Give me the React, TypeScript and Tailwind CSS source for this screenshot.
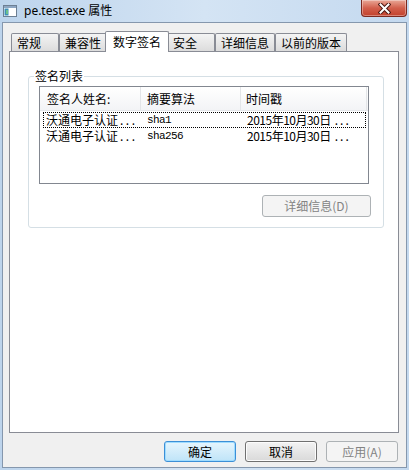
import React from 'react';

type TabDef = { label: string; w: string; active?: boolean };

const tabs: TabDef[] = [
  { label: '常规', w: 'w-[48px]' },
  { label: '兼容性', w: 'w-[48px]' },
  { label: '数字签名', w: 'w-[64px]', active: true },
  { label: '安全', w: 'w-[48px]' },
  { label: '详细信息', w: 'w-[60px]' },
  { label: '以前的版本', w: 'w-[72px]' },
];

const signers = [
  { name: '沃通电子认证', algo: 'sha1', time: '2015年10月30日' },
  { name: '沃通电子认证', algo: 'sha256', time: '2015年10月30日' },
];

// little app-window glyph in the caption
const WinIcon = () => (
  <svg width="14" height="12" viewBox="0 0 14 12" className="shrink-0">
    <rect x="0.5" y="0.5" width="13" height="11" fill="#ffffff" stroke="#6d7f93" />
    <rect x="1" y="1" width="12" height="2" fill="#8ea6c2" />
    <rect x="1.5" y="3.5" width="4" height="7" fill="#3f8fb8" />
    <rect x="3" y="5" width="2" height="4" fill="#6cc08a" />
  </svg>
);

const CloseButton = () => (
  <div className="absolute right-[2px] top-0 flex h-[17px] w-[46px] items-center justify-center rounded-b-[4px] border border-t-0 border-[#7b2a20] bg-gradient-to-b from-[#e8a797] via-[#d25f4c] to-[#c2412c] shadow-[inset_0_0_0_1px_rgba(255,255,255,0.35)]">
    <svg width="13" height="11" viewBox="0 0 13 11">
      <path d="M2.5 1.5 L10.5 9.5 M10.5 1.5 L2.5 9.5" stroke="#4b1711" strokeWidth="4" strokeLinecap="square" />
      <path d="M2.5 1.5 L10.5 9.5 M10.5 1.5 L2.5 9.5" stroke="#ffffff" strokeWidth="2" strokeLinecap="square" />
    </svg>
  </div>
);

const Tab = ({ t }: { t: TabDef }) =>
  t.active ? (
    <div className={`relative -mx-[2px] flex h-[21px] items-center rounded-t-[2px] border border-b-0 border-[#898c95] bg-white pl-[7px] ${t.w}`}>
      {t.label}
    </div>
  ) : (
    <div className={`mb-[1px] flex h-[18px] items-center rounded-t-[2px] border border-b-0 border-[#898c95] bg-gradient-to-b from-[#f4f4f4] to-[#dcdcdc] pl-[5px] ${t.w}`}>
      {t.label}
    </div>
  );

export default function App() {
  return (
    <div className="relative flex h-[470px] w-[409px] flex-col overflow-hidden bg-gradient-to-r from-[#bdd4ec] via-[#d4e4f4] to-[#c4d9ef] px-[2px] pb-[2px] font-['Noto_Sans_CJK_SC',sans-serif] text-[12px] leading-none text-black">
      {/* caption */}
      <div className="flex h-[22px] items-center pl-[1px]">
        <WinIcon />
        <span className="ml-[7px] font-['Noto_Sans','Noto_Sans_CJK_SC',sans-serif] text-[12px]">pe.test.exe 属性</span>
      </div>
      <CloseButton />

      {/* client area */}
      <div className="flex flex-1 flex-col border border-[#8597ad] bg-[#f0f0f0] pl-[6px] pt-[8px]">
        <div className="relative z-10 -mb-[1px] flex h-[21px] items-end pl-[2px]">
          {tabs.map((t) => (
            <Tab key={t.label} t={t} />
          ))}
        </div>

        <div className="h-[382px] w-[390px] border border-[#898c95] bg-white pl-[18px] pt-[24px]">
          {/* group box */}
          <div className="relative h-[152px] w-[356px] rounded-[3px] border border-[#d5dfe5] pl-[10px] pt-[9px]">
            <span className="absolute left-[5px] top-[-8px] bg-white px-[1px] leading-[14px]">签名列表</span>

            <div className="h-[98px] w-[330px] border border-[#828790] bg-white">
              <div className="flex h-[24px] border-b border-[#e5e7ea] bg-gradient-to-b from-white to-[#f3f4f6]">
                <div className="flex w-[101px] items-center border-r border-[#e3e5e8] pl-[7px]">签名人姓名:</div>
                <div className="flex w-[100px] items-center border-r border-[#e3e5e8] pl-[6px]">摘要算法</div>
                <div className="flex w-[126px] items-center border-r border-[#e3e5e8] pl-[5px]">时间戳</div>
              </div>
              <div className="ml-[3px] mt-[1px]">
                {signers.map((s, i) => (
                  <div
                    key={i}
                    className={`flex h-[16px] w-[323px] items-center border border-dotted ${i === 0 ? 'border-black' : 'border-transparent'}`}
                  >
                    <div className="w-[97px] whitespace-nowrap pl-[2px]">
                      {s.name}
                      <span className="ml-[2px] tracking-[2.5px]">...</span>
                    </div>
                    <div className="w-[100px] pl-[6px] pt-[1px] font-['Liberation_Mono',monospace] text-[11px] tracking-[-0.6px]">{s.algo}</div>
                    <div className="whitespace-nowrap pl-[6px] tracking-[-0.5px]">
                      {s.time}
                      <span className="ml-[4px] tracking-[2px]">...</span>
                    </div>
                  </div>
                ))}
              </div>
            </div>

            <div className="mt-[11px] flex justify-end pr-[12px]">
              <div className="flex h-[22px] w-[109px] items-center justify-center rounded-[3px] border border-[#adb2b5] bg-[#f4f4f4] text-[#838383]">
                详细信息(D)
              </div>
            </div>
          </div>
        </div>

        {/* dialog buttons */}
        <div className="mt-[8px] flex w-[390px] justify-end gap-[9px] pr-[1px]">
          <div className="flex h-[21px] w-[72px] items-center justify-center rounded-[3px] border border-[#3c8fd6] bg-gradient-to-b from-[#e6f5fd] to-[#bfe4f8] shadow-[inset_0_0_0_1px_#9fdcff]">
            确定
          </div>
          <div className="flex h-[21px] w-[72px] items-center justify-center rounded-[3px] border border-[#707070] bg-gradient-to-b from-[#f3f3f3] to-[#d9d9d9] shadow-[inset_0_0_0_1px_#fcfcfc]">
            取消
          </div>
          <div className="flex h-[21px] w-[72px] items-center justify-center rounded-[3px] border border-[#adb2b5] bg-[#f4f4f4] text-[#838383]">
            应用(A)
          </div>
        </div>
      </div>
    </div>
  );
}
